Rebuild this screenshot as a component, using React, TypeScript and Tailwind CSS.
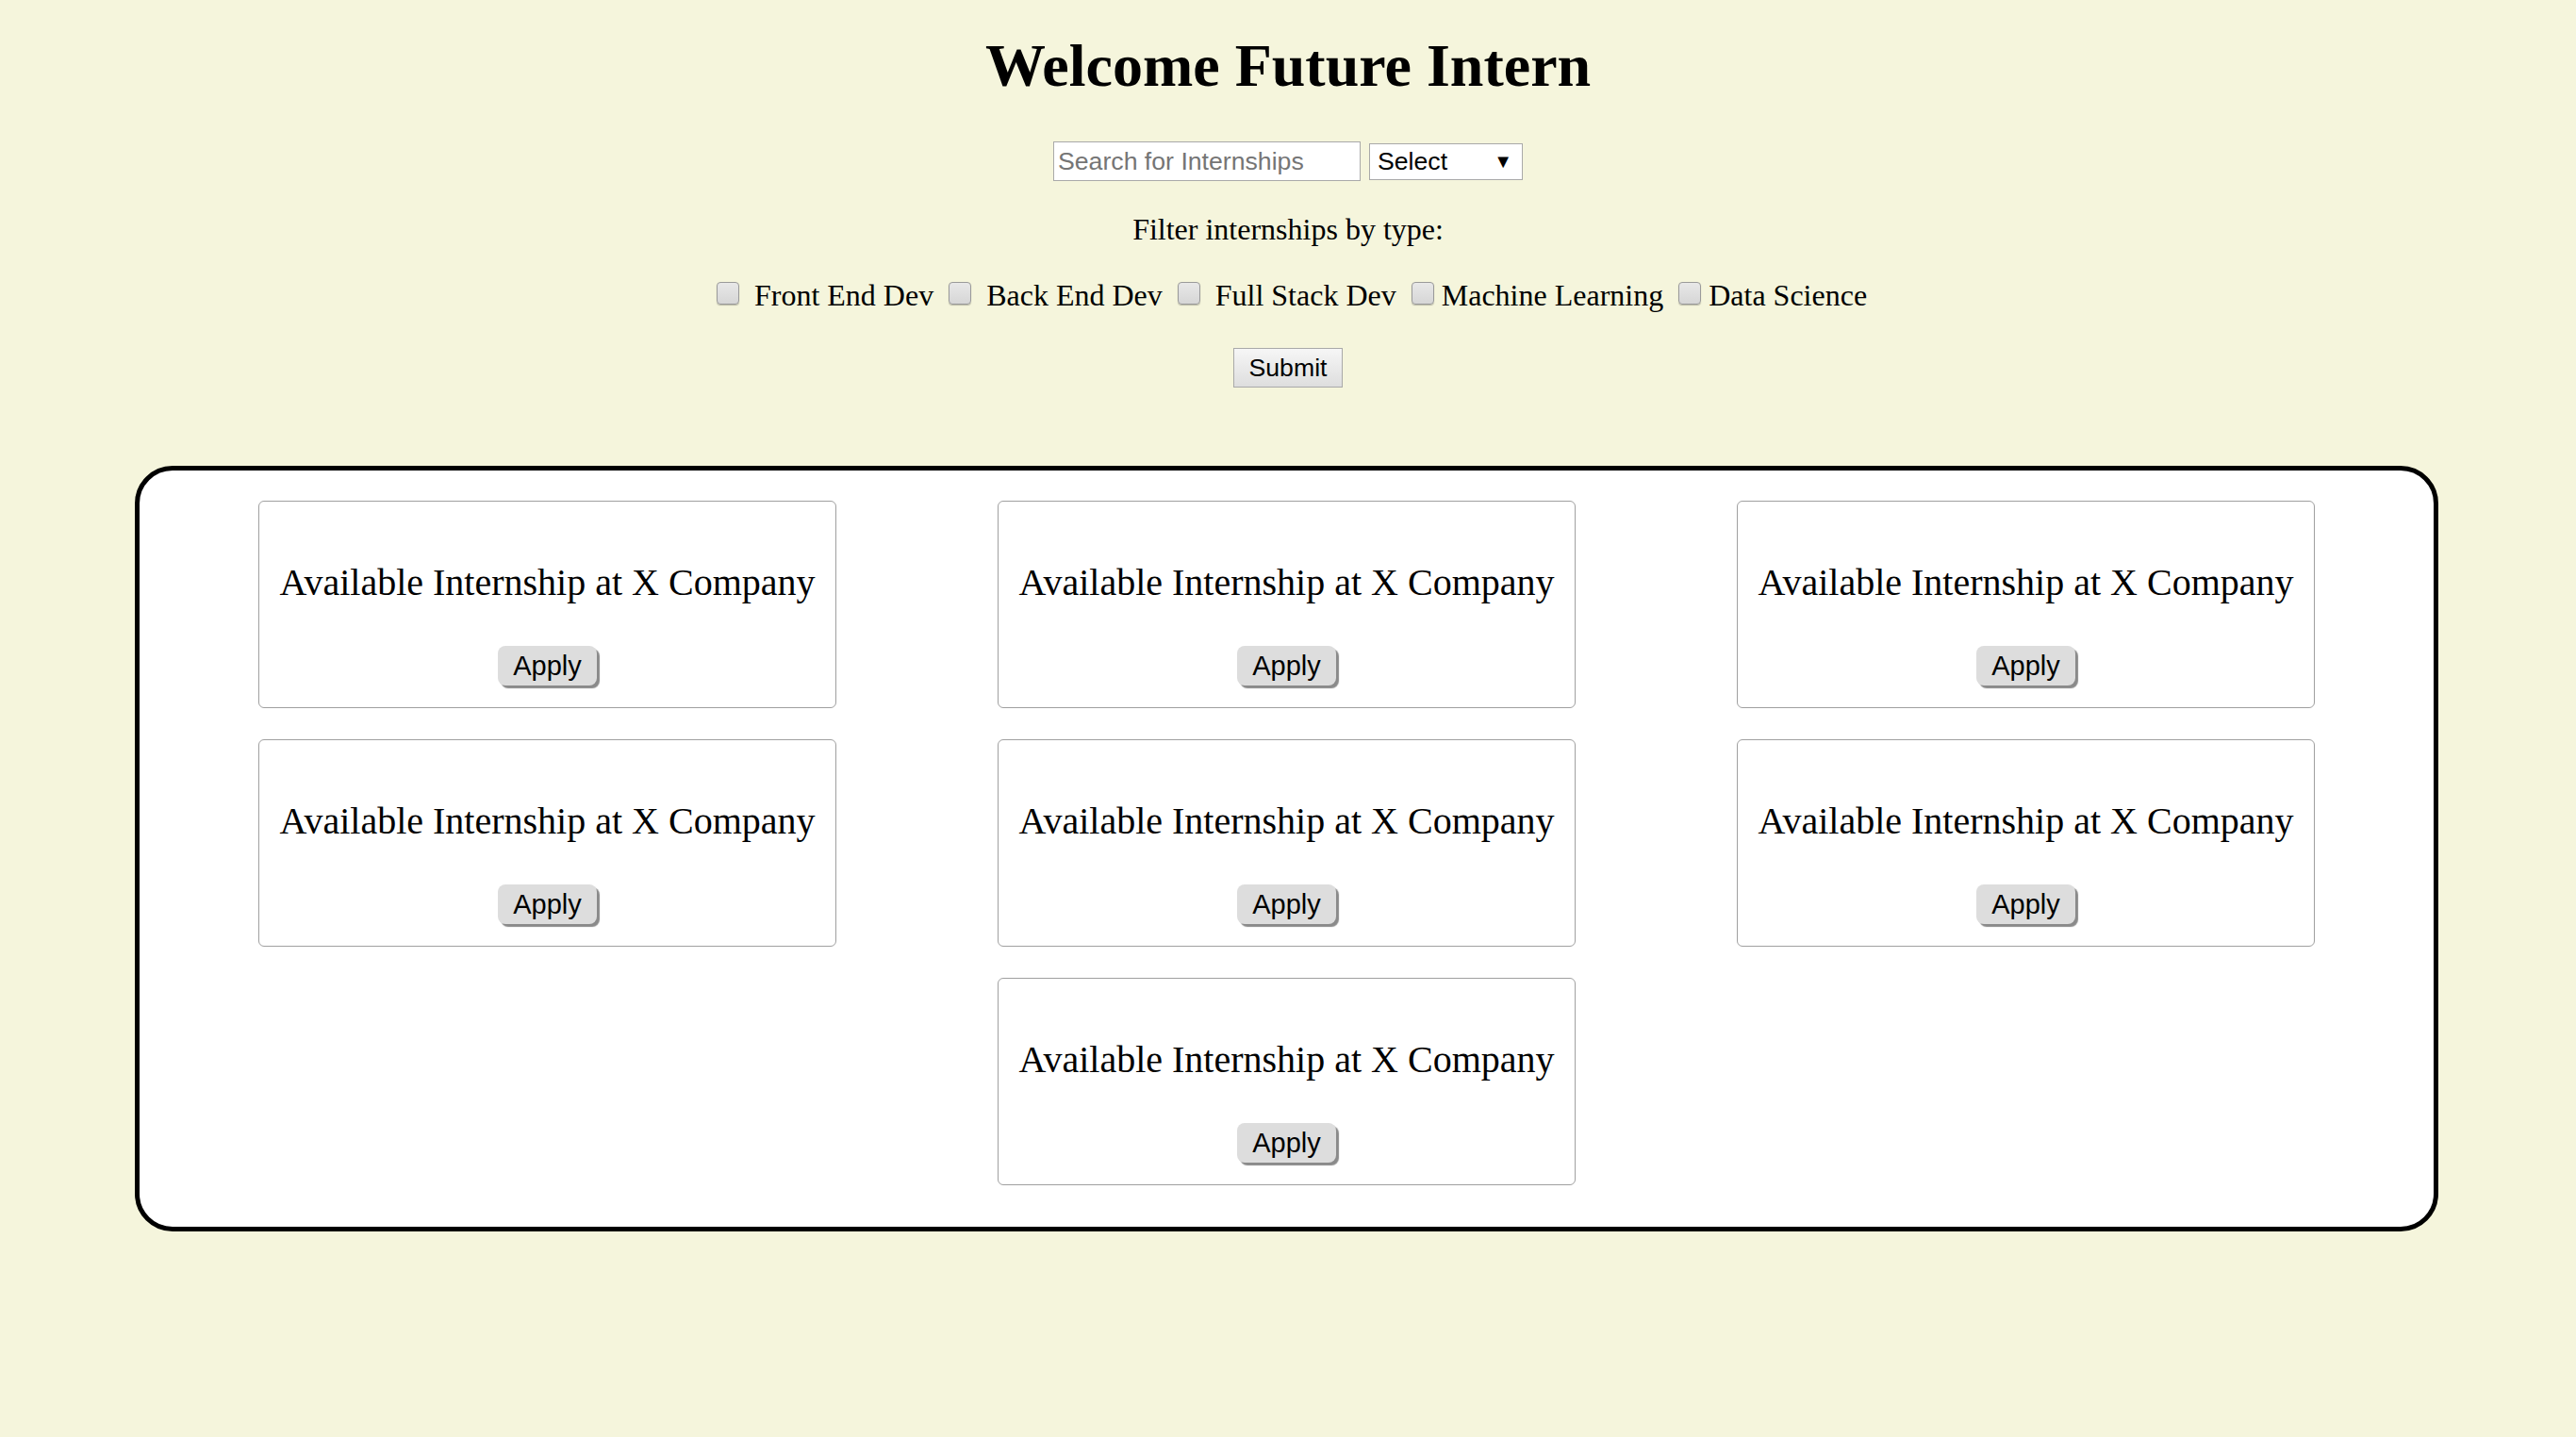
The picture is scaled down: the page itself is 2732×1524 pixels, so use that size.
import React from "react";

const TYPES = [
  { label: "Front End Dev", space: true },
  { label: "Back End Dev", space: true },
  { label: "Full Stack Dev", space: true },
  { label: "Machine Learning", space: false },
  { label: "Data Science", space: false },
];

export default function App() {
  const cards = Array.from({ length: 7 }, (_, i) => i);

  return (
    <div className="min-h-screen bg-[#f5f5dc] pt-[33px] pb-[40px] font-['Liberation_Serif',serif] text-black">
      <h1 className="text-center text-[64px] font-bold leading-[74px]">Welcome Future Intern</h1>

      <div className="mt-[43px] flex items-center justify-center gap-[9px] font-['Liberation_Sans',Arial,sans-serif] text-[26.67px]">
        <input
          type="text"
          placeholder="Search for Internships"
          className="h-[42px] w-[326px] border border-[#a9a9a9] bg-white px-[4px] text-black placeholder:text-[#757575] outline-none"
        />
        <div className="flex h-[39px] w-[163px] items-center justify-between border border-[#a9a9a9] bg-white pl-[8px] pr-[10px]">
          <span>Select</span>
          <span className="text-[20px]">▼</span>
        </div>
      </div>

      <p className="mt-[33px] text-center text-[32px] leading-[37px]">Filter internships by type:</p>

      <div className="mt-[33px] text-center text-[32px] leading-[37px]">
        {TYPES.map(t => (
          <React.Fragment key={t.label}>
            <input
              type="checkbox"
              className="relative -top-[6px] ml-[8px] mr-[8px] inline-block h-[24px] w-[24px] appearance-none rounded-[4px] border border-[#9a9a9a] bg-linear-to-b from-[#e8e8e8] to-[#d6d6d6] align-middle shadow-[0_1px_1px_rgba(0,0,0,0.25)]"
            />
            {t.space ? " " : ""}
            {t.label}{" "}
          </React.Fragment>
        ))}
      </div>

      <div className="mt-[37px] flex justify-center">
        <button className="h-[42px] border border-[#a9a9a9] bg-linear-to-b from-[#f6f6f6] to-[#dedede] px-[16px] font-['Liberation_Sans',Arial,sans-serif] text-[26.67px] leading-none">
          Submit
        </button>
      </div>

      <div className="ml-[143px] mt-[83px] w-[2443px] rounded-[40px] border-[5px] border-black bg-white pb-[44px] pt-[32px]">
        <div className="mx-auto flex w-[2181px] flex-wrap justify-center gap-x-[171px] gap-y-[33px]">
          {cards.map(i => (
            <div
              key={i}
              className="flex h-[220px] w-[613px] flex-col items-center rounded-[6px] border border-[#a0a0a0] bg-white pt-[63px]"
            >
              <div className="text-[40px] leading-[46px]">Available Internship at X Company</div>
              <button className="mt-[44px] h-[42px] rounded-[8px] bg-[#dddddd] px-[16px] font-['Liberation_Sans',Arial,sans-serif] text-[29px] leading-none shadow-[3px_3px_1px_#8a8a8a]">
                Apply
              </button>
            </div>
          ))}
        </div>
      </div>
    </div>
  );
}
